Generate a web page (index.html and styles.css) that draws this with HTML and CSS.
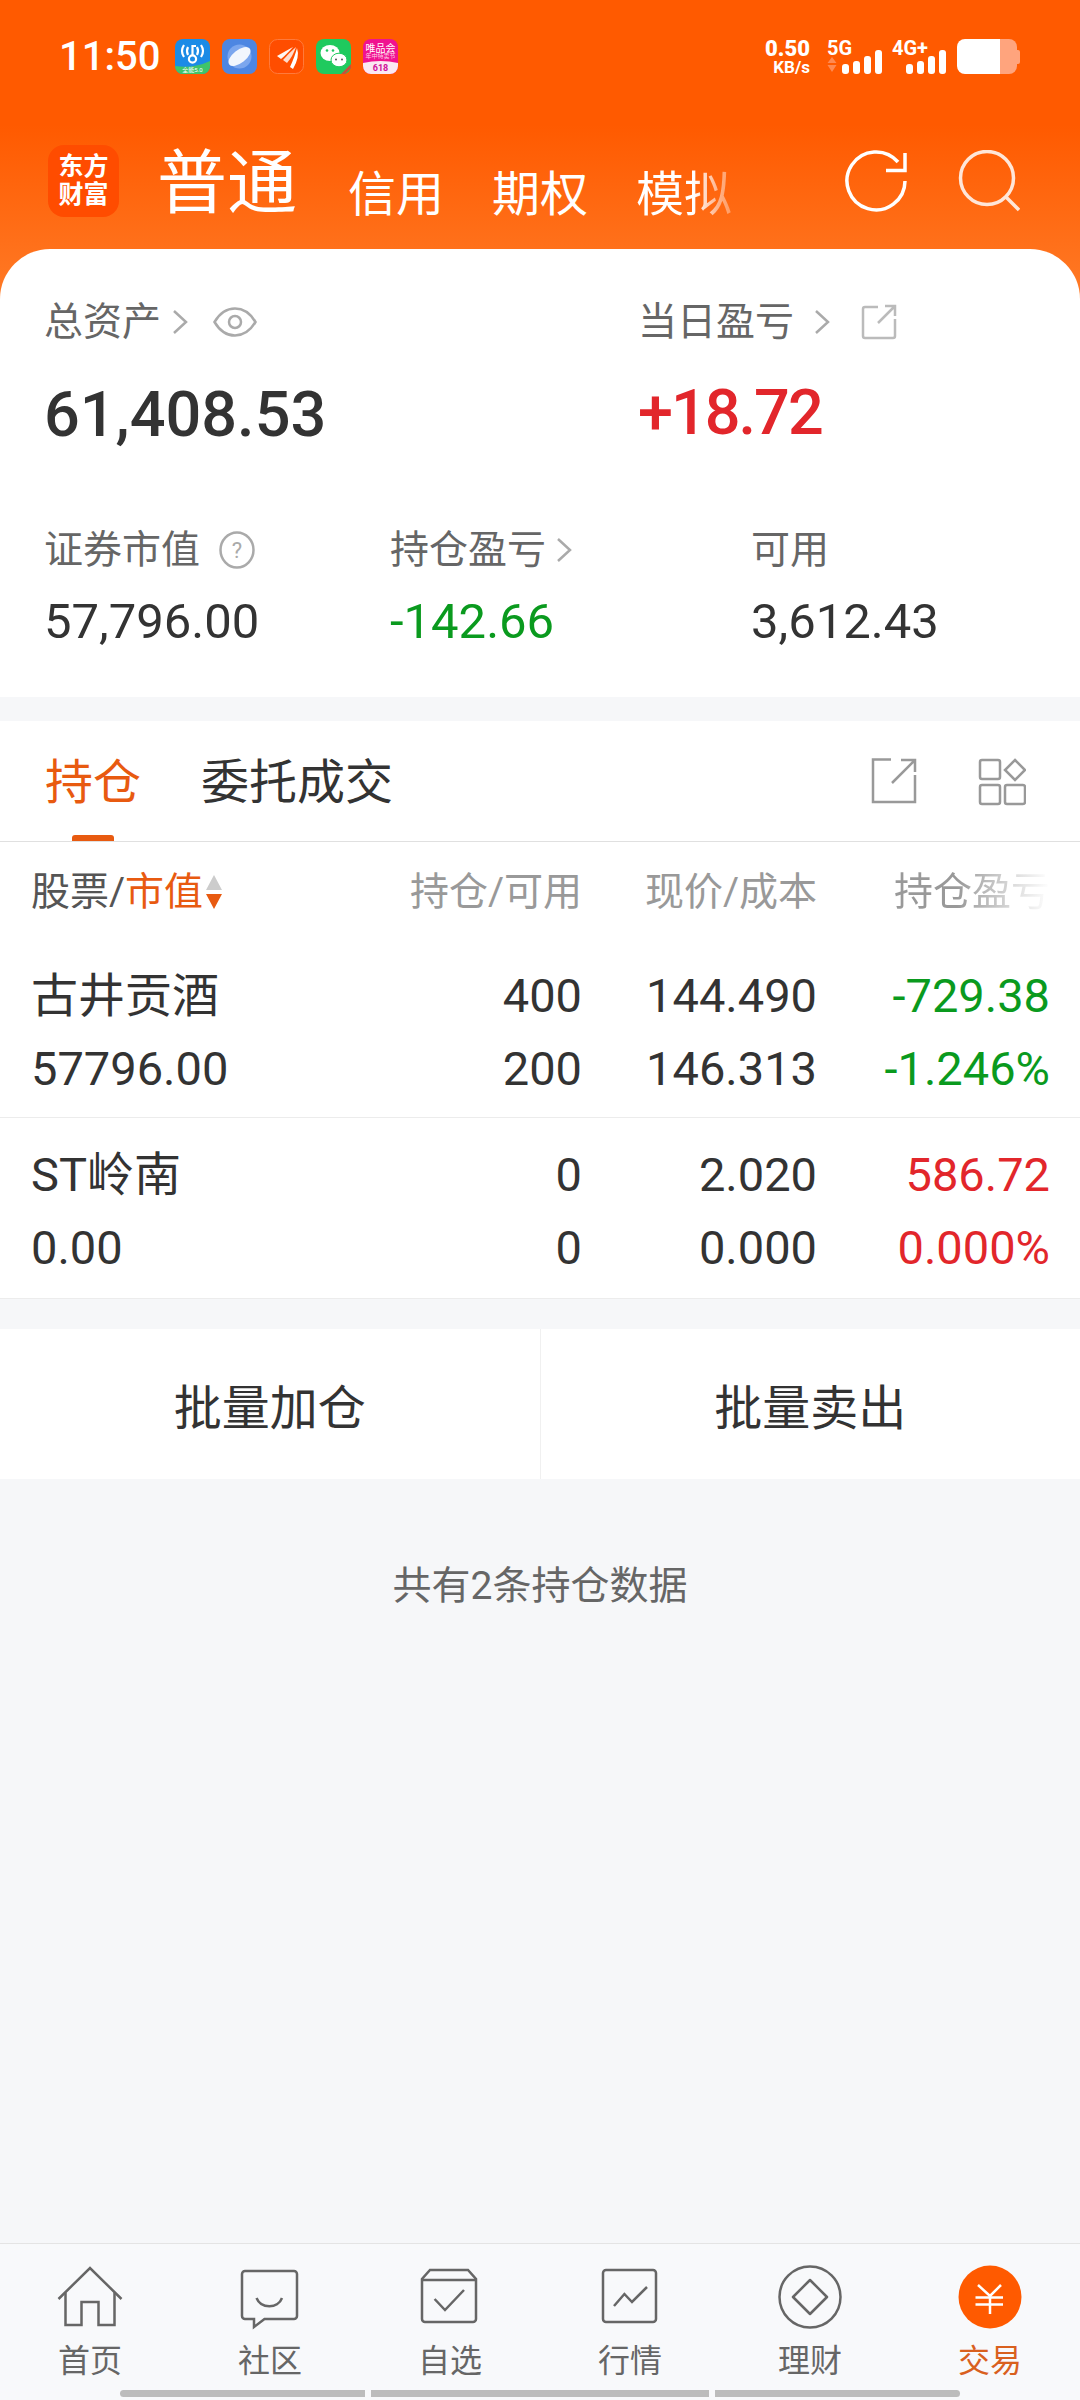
FILE: index.html
```html
<!DOCTYPE html>
<html lang="zh-CN">
<head>
  <meta charset="UTF-8">
  <meta name="viewport" content="width=device-width, initial-scale=1.0">
  <title>交易</title>
  <link rel="stylesheet" href="styles.css">
</head>
<body>
  <div class="page">
    <div class="top">
      <div class="status">
        <span class="time">11:50</span>
        <div class="apps">
          <svg viewBox="0 0 35 35"><rect width="35" height="35" rx="8" fill="#1b8be6"/><path d="M0 27 Q18 30 35 22 V27 a8 8 0 0 1-8 8 H8 a8 8 0 0 1-8-8z" fill="#3fc46a"/><g fill="none" stroke="#fff" stroke-width="2.2"><path d="M9 6 Q5 12 9 18"/><path d="M26 6 Q30 12 26 18"/><path d="M13 8 Q11 12 13 16"/><path d="M22 8 Q24 12 22 16"/><circle cx="17.5" cy="20" r="3.6"/><path d="M17.5 16 V7 H21"/></g><text x="17.5" y="33" class="tiny" fill="#fff">全能5.0</text></svg>
          <svg viewBox="0 0 35 35"><rect width="35" height="35" rx="8" fill="#4d86e2"/><circle cx="17.5" cy="17.5" r="12" fill="#7ba6ee"/><ellipse cx="17.5" cy="17.5" rx="13" ry="6.5" fill="#f2f6fd" transform="rotate(-38 17.5 17.5)"/></svg>
          <svg viewBox="0 0 35 35"><rect x=".5" y=".5" width="34" height="34" rx="8" fill="#ff4d00" stroke="#ff7a3c"/><g fill="#fff"><path d="M8 17 Q15 13 24 8 Q17 16 12 20z" opacity=".95"/><path d="M14 21 Q20 14 27 8 Q24 17 18 24z" opacity=".8"/><path d="M21 28 Q26 17 28 9 Q31 18 24 30z"/></g></svg>
          <svg viewBox="0 0 35 35"><rect width="35" height="35" rx="8" fill="#1fca5e"/><ellipse cx="14" cy="14" rx="9.5" ry="8" fill="#fff"/><ellipse cx="23" cy="21" rx="8" ry="6.8" fill="#fff" stroke="#1fca5e"/><g fill="#1fca5e"><circle cx="11" cy="11.5" r="1.3"/><circle cx="17" cy="11.5" r="1.3"/></g><g fill="#555"><circle cx="20" cy="20.5" r="1"/><circle cx="26" cy="20.5" r="1"/></g><path d="M25 35 L35 25 V29 L29 35z" fill="#c9503c"/></svg>
          <svg viewBox="0 0 35 35"><rect width="35" height="35" rx="8" fill="#f01390"/><path d="M0 24 Q17.500 20 35 24 V27 a8 8 0 0 1-8 8 H8 a8 8 0 0 1-8-8z" fill="#fbe9f3"/><text x="17.500" y="13" class="vip" fill="#fff">唯品会</text><text x="17.500" y="19" class="tiny" fill="#ffd0e6">年中特卖节</text><text x="17.500" y="32" class="vip-num" fill="#d0109a">618</text></svg>
        </div>
        <div class="status-right">
          <div class="speed"><b>0.50</b><span>KB/s</span></div>
          <div class="sig sig-5g">
            <span class="sig-name">5G</span>
            <div class="bars">
              <svg class="updown" viewBox="0 0 10 20"><path d="M5 3 L9.500 9 H.5z M5 18 L.5 11 H9.500z" fill="#ff8a52"/></svg>
              <i class="b1"></i><i class="b2"></i><i class="b3"></i><i class="b4"></i>
            </div>
          </div>
          <div class="sig">
            <span class="sig-name">4G+</span>
            <div class="bars">
              <i class="b1"></i><i class="b2"></i><i class="b3"></i><i class="b4"></i>
            </div>
          </div>
          <div class="battery"><div class="cell"></div><div class="nub"></div></div>
        </div>
      </div>

      <div class="head">
        <div class="logo"><span>东方</span><span>财富</span></div>
        <span class="acc-main">普通</span>
        <span class="acc">信用</span>
        <span class="acc">期权</span>
        <span class="acc acc-fade">模拟</span>
        <div class="head-icons">
          <svg viewBox="0 0 62 62" fill="none" stroke="#fff" stroke-width="3.500"><path d="M53 12 A29 29 0 1 0 60 31"/><path d="M60 3 V20.500 H41"/></svg>
          <svg viewBox="0 0 62 62" fill="none" stroke="#ffe6d8" stroke-width="3.500"><circle cx="29" cy="28" r="26.500"/><path d="M48 47 L61 60"/></svg>
        </div>
      </div>

      <div class="card">
        <div class="sum-row">
          <div>
            <div class="label">总资产
              <svg class="chev" viewBox="0 0 16 26"><path d="M2 2 L14 13 L2 24"/></svg>
              <svg class="eye" viewBox="0 0 44 30" fill="none" stroke="#aaa" stroke-width="2.500"><path d="M1.500 15 C8 4 16 1.500 22 1.500 S36 4 42.500 15 C36 26 28 28.500 22 28.500 S8 26 1.500 15z"/><circle cx="22" cy="15" r="6"/></svg>
            </div>
            <div class="big">61,408.53</div>
          </div>
          <div>
            <div class="label">当日盈亏
              <svg class="chev chev-far" viewBox="0 0 16 26"><path d="M2 2 L14 13 L2 24"/></svg>
              <svg class="share" viewBox="0 0 36 36" fill="none" stroke="#bbb" stroke-width="2.500"><path d="M17 3 H4 a2 2 0 0 0-2 2 V32 a2 2 0 0 0 2 2 H32 a2 2 0 0 0 2-2 V15"/><path d="M17 19 L34 2 M24 2 H34 V12"/></svg>
            </div>
            <div class="big red big-up">+18.72</div>
          </div>
        </div>
        <div class="sub-row">
          <div>
            <div class="label">证券市值
              <svg class="help" viewBox="0 0 36 38"><ellipse cx="18" cy="19" rx="16.500" ry="17.500" fill="none" stroke="#aaa" stroke-width="2.500"/><text x="18" y="27" class="help-q">?</text></svg>
            </div>
            <div class="mid">57,796.00</div>
          </div>
          <div>
            <div class="label">持仓盈亏<svg class="chev chev-near" viewBox="0 0 16 26"><path d="M2 2 L14 13 L2 24"/></svg></div>
            <div class="mid green">-142.66</div>
          </div>
          <div>
            <div class="label">可用</div>
            <div class="mid">3,612.43</div>
          </div>
        </div>
      </div>
    </div>

    <div class="main">
      <div class="tabs">
        <div class="tab on"><span>持仓</span><i></i></div>
        <div class="tab"><span>委托成交</span></div>
        <div class="tab-icons">
          <svg class="ic-share" viewBox="0 0 46 46" fill="none" stroke="#999" stroke-width="2.500"><path d="M20 1.500 H2 V44 H44 V17"/><path d="M21 25 L44 2 M30 2 H44 V14"/></svg>
          <svg class="ic-grid" viewBox="0 0 48 48" fill="none" stroke="#999" stroke-width="2.500"><rect x="2" y="2" width="20" height="19" rx="2"/><rect x="2" y="27" width="20" height="19" rx="2"/><rect x="27" y="27" width="20" height="19" rx="2"/><path d="M37 2 L47 12 L37 22 L27 12z"/></svg>
        </div>
      </div>

      <div class="grid grid-head">
        <div class="col-name">股票/<span class="orange">市值</span><svg class="sort" viewBox="0 0 18 34"><path d="M9 0 L17 15 H1z" fill="#ccc"/><path d="M9 34 L1 19 H17z" fill="#e85a10"/></svg></div>
        <div class="num">持仓/可用</div>
        <div class="num">现价/成本</div>
        <div class="num fade-text">持仓盈亏</div>
      </div>

      <div class="stock stock-first">
        <div class="grid line"><div>古井贡酒</div><div class="num">400</div><div class="num">144.490</div><div class="num green">-729.38</div></div>
        <div class="grid line"><div>57796.00</div><div class="num">200</div><div class="num">146.313</div><div class="num green">-1.246%</div></div>
      </div>
      <div class="stock">
        <div class="grid line"><div>ST岭南</div><div class="num">0</div><div class="num">2.020</div><div class="num red">586.72</div></div>
        <div class="grid line"><div>0.00</div><div class="num">0</div><div class="num">0.000</div><div class="num red">0.000%</div></div>
      </div>

      <div class="actions">
        <div class="action">批量加仓</div>
        <div class="action">批量卖出</div>
      </div>
      <div class="note">共有2条持仓数据</div>
    </div>

    <div class="nav">
      <div class="nav-items">
        <div class="nav-item">
          <svg viewBox="0 0 70 70" fill="none" stroke="#666" stroke-width="2.500"><path d="M3.500 36 L35 5 L66.500 36"/><path d="M10.500 29.500 V62 H26.500 V39 H43.500 V62 H59.500 V29.500"/></svg>
          <span>首页</span>
        </div>
        <div class="nav-item">
          <svg viewBox="0 0 70 70" fill="none" stroke="#666" stroke-width="2.500"><path d="M10 8 H59 a3 3 0 0 1 3 3 V53 a3 3 0 0 1-3 3 H29.500 L19 64 V56 H10 a3 3 0 0 1-3-3 V11 a3 3 0 0 1 3-3z"/><path d="M21.500 35 C26 46 43 46 47 35"/></svg>
          <span>社区</span>
        </div>
        <div class="nav-item">
          <svg viewBox="0 0 70 70" fill="none" stroke="#666" stroke-width="2.500"><path d="M15 7 H53 L61 16 V56 a3 3 0 0 1-3 3 H10 a3 3 0 0 1-3-3 V16z"/><path d="M7 17 H61"/><path d="M19.600 36 L30 47 L49 27"/></svg>
          <span>自选</span>
        </div>
        <div class="nav-item">
          <svg viewBox="0 0 70 70" fill="none" stroke="#666" stroke-width="2.500"><rect x="8" y="7" width="53" height="52" rx="3"/><path d="M19 43 L29.400 31 L37 39 L52 24"/></svg>
          <span>行情</span>
        </div>
        <div class="nav-item">
          <svg viewBox="0 0 70 70" fill="none" stroke="#666" stroke-width="2.500" stroke-linejoin="round"><circle cx="35" cy="34" r="30.500"/><path d="M35 17 L52 34 L35 51 L18 34z"/></svg>
          <span>理财</span>
        </div>
        <div class="nav-item on">
          <svg viewBox="0 0 70 70" fill="none" stroke="#fff" stroke-width="2.500"><circle cx="35" cy="34" r="31.500" fill="#ff5a00" stroke="none"/><path d="M23 22 L35 33 L46 22"/><path d="M20.500 34.500 H48 M20.500 41.500 H48 M35 33 V51"/></svg>
          <span>交易</span>
        </div>
      </div>
      <div class="gesture"><i class="g-left"></i><i class="g-mid"></i><i class="g-right"></i></div>
    </div>
  </div>
</body>
</html>
```

FILE: styles.css
```css
*{
  margin: 0;
  padding: 0;
  box-sizing: border-box;
}
body{
  width: 1080px;
  height: 2400px;
  overflow: hidden;
  font-family: Roboto, "Noto Sans CJK SC", sans-serif;
  color: #333;
  background-color: #f6f7f9;
}
i{
  display: block;
}
svg{
  display: block;
  flex: none;
}
.page{
  height: 2400px;
  display: flex;
  flex-direction: column;
}
.top{
  background: linear-gradient(180deg, #ff5a00 0, #ff5a00 125px, #ff7a26 300px) no-repeat;
  background-size: 100% 300px;
}

/* status bar */
.status{
  height: 35px;
  margin-top: 39px;
  padding: 0 60px 0 59px;
  display: flex;
  color: #fff;
}
.time{
  width: 116px;
  font-size: 40px;
  font-weight: 500;
  line-height: 36px;
}
.apps{
  display: flex;
  gap: 12px;
}
.apps svg{
  width: 35px;
  height: 35px;
}
.tiny{
  font-size: 6px;
  text-anchor: middle;
}
.vip{
  font-size: 10px;
  text-anchor: middle;
}
.vip-num{
  font-size: 9px;
  font-weight: 700;
  text-anchor: middle;
}
.status-right{
  margin-left: auto;
  display: flex;
  gap: 11px;
}
.speed{
  width: 45px;
  margin-right: 6px;
  display: flex;
  flex-direction: column;
  align-items: flex-end;
  font-weight: 700;
  white-space: nowrap;
}
.speed b{
  font-size: 22px;
  line-height: 19px;
}
.speed span{
  font-size: 17px;
  line-height: 18px;
}
.sig{
  width: 54px;
  display: grid;
}
.sig-name{
  grid-area: 1 / 1;
  font-size: 20px;
  font-weight: 700;
  line-height: 19px;
  white-space: nowrap;
}
.bars{
  grid-area: 1 / 1;
  display: flex;
  align-items: flex-end;
  justify-content: flex-end;
  gap: 4px;
}
.bars i{
  width: 7px;
  border-radius: 3px;
  background-color: #fff;
}
.updown{
  width: 10px;
  height: 20px;
  margin-right: 1px;
  margin-left: 0;
}
.b1{
  height: 10px;
}
.b2{
  height: 13px;
}
.b3{
  height: 18px;
}
.b4{
  height: 24px;
}
.battery{
  display: flex;
  align-items: center;
}
.cell{
  width: 60px;
  height: 35px;
  border-radius: 8px;
  background: linear-gradient(90deg, #fff 43px, #ffa47d 43px);
}
.nub{
  width: 3px;
  height: 14px;
  border-radius: 0 2px 2px 0;
  background-color: #ffa47d;
}

/* account tabs */
.head{
  height: 72px;
  margin: 71px 0 32px;
  padding: 0 60px 0 48px;
  display: flex;
  align-items: flex-end;
  color: #fff;
}
.logo{
  width: 71px;
  height: 72px;
  margin-right: 38px;
  border-radius: 16px;
  background-color: #ff4c00;
  display: flex;
  flex-direction: column;
  align-items: center;
  justify-content: center;
  font-size: 25px;
  font-weight: 700;
  line-height: 28px;
}
.acc-main{
  margin-bottom: -3px;
  margin-right: 3px;
  font-size: 70px;
  line-height: 72px;
}
.acc{
  margin-left: 48px;
  margin-bottom: -3px;
  font-size: 48px;
  line-height: 50px;
}
.acc-fade{
  color: transparent;
  background: linear-gradient(90deg, #fff 60%, #ffb48c 85%, #ff9a60 100%);
  -webkit-background-clip: text;
  background-clip: text;
}
.head-icons{
  margin-left: auto;
  align-self: center;
  display: flex;
  gap: 51px;
}
.head-icons svg{
  width: 62px;
  height: 62px;
}

/* asset summary */
.card{
  height: 448px;
  padding: 51px 0 0 44px;
  border-radius: 50px 50px 0 0;
  background-color: #fff;
}
.sum-row{
  display: grid;
  grid-template-columns: 594px 1fr;
}
.sub-row{
  margin-top: 78px;
  display: grid;
  grid-template-columns: 346px 361px 1fr;
}
.label{
  height: 44px;
  display: flex;
  align-items: center;
  font-size: 39px;
  line-height: 44px;
  color: #666;
  white-space: nowrap;
}
.chev{
  width: 16px;
  height: 26px;
  margin-left: 11px;
  fill: none;
  stroke: #aaa;
  stroke-width: 2.500;
}
.chev-far{
  margin-left: 20px;
}
.chev-near{
  margin-left: 10px;
}
.eye{
  width: 44px;
  height: 30px;
  margin-left: 25px;
}
.share{
  width: 36px;
  height: 36px;
  margin-left: 31px;
}
.help{
  width: 36px;
  height: 38px;
  margin-left: 19px;
}
.help-q{
  font-size: 22px;
  text-anchor: middle;
  fill: #aaa;
}
.big{
  margin-top: 36px;
  font-size: 63px;
  font-weight: 500;
  line-height: 70px;
}
.big-up{
  margin-top: 34px;
  letter-spacing: -2px;
}
.mid{
  margin-top: 20px;
  font-size: 49px;
  line-height: 60px;
}
.red{
  color: #e2262b;
}
.green{
  color: #0a9a1e;
}
.orange{
  color: #e85a10;
}

/* holdings */
.main{
  flex: 1;
  padding-top: 24px;
}
.tabs{
  height: 121px;
  padding: 37px 54px 0 45px;
  display: flex;
  background-color: #fff;
  border-bottom: 1px solid #e0e0e0;
}
.tab{
  margin-right: 60px;
  display: flex;
  flex-direction: column;
  align-items: center;
  font-size: 48px;
  line-height: 50px;
}
.tab.on{
  color: #e85a10;
}
.tab i{
  width: 42px;
  height: 6px;
  margin-top: 27px;
  border-radius: 3px 3px 0 0;
  background-color: #e85a10;
}
.tab-icons{
  margin-left: auto;
  display: flex;
  gap: 61px;
}
.ic-share{
  width: 46px;
  height: 46px;
}
.ic-grid{
  width: 48px;
  height: 48px;
}
.grid{
  padding: 0 30px 0 31px;
  display: grid;
  grid-template-columns: 246px 305px 235px 233px;
  white-space: nowrap;
}
.grid-head{
  padding-top: 28px;
  padding-bottom: 45px;
  background-color: #fff;
  font-size: 39px;
  line-height: 44px;
  color: #999;
}
.col-name{
  display: flex;
  color: #555;
}
.sort{
  width: 18px;
  height: 34px;
  margin: 5px 0 0 2px;
}
.num{
  text-align: right;
}
.fade-text{
  color: transparent;
  background: linear-gradient(90deg, #999 60%, #ddd 85%, #fff 100%);
  -webkit-background-clip: text;
  background-clip: text;
}
.stock{
  padding: 20px 0 14px;
  background-color: #fff;
  border-bottom: 1px solid #ececec;
}
.stock-first{
  padding: 0 0 12px;
}
.line{
  font-size: 47px;
  line-height: 73px;
}
.actions{
  height: 150px;
  margin-top: 30px;
  display: flex;
  background-color: #fff;
}
.action{
  flex: 1;
  display: flex;
  align-items: center;
  justify-content: center;
  font-size: 48px;
}
.action + .action{
  border-left: 1px solid #f0f0f0;
}
.note{
  margin-top: 82px;
  text-align: center;
  font-size: 39px;
  line-height: 50px;
  color: #666;
}

/* bottom nav */
.nav{
  height: 157px;
  background-color: #f8f9fb;
  border-top: 1px solid #e4e4e4;
}
.nav-items{
  height: 146px;
  padding-top: 19px;
  display: grid;
  grid-template-columns: repeat(6, 1fr);
}
.nav-item{
  display: flex;
  flex-direction: column;
  align-items: center;
  font-size: 32px;
  line-height: 40px;
  color: #666;
}
.nav-item svg{
  width: 70px;
  height: 70px;
  margin-bottom: 8px;
}
.nav-item.on{
  color: #d9601e;
}
.gesture{
  display: flex;
  justify-content: center;
  gap: 6px;
}
.gesture i{
  height: 7px;
  background-color: #bcbcbc;
}
.g-left{
  width: 245px;
  border-radius: 4px 0 0 4px;
}
.g-mid{
  width: 338px;
}
.g-right{
  width: 245px;
  border-radius: 0 4px 4px 0;
}
```
